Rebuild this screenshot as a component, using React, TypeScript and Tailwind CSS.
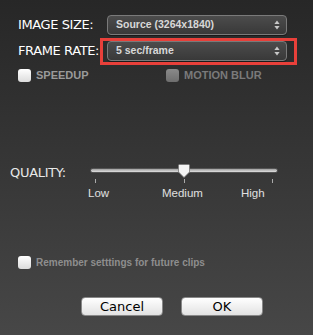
import React from "react";

const Arrows = () => (
  <svg width="6" height="10" viewBox="0 0 6 10" className="shrink-0">
    <path d="M3 0.5 L5.6 4 L0.4 4 Z" fill="#c8c8c8" />
    <path d="M3 9.5 L5.6 6 L0.4 6 Z" fill="#c8c8c8" />
  </svg>
);

const bold = { fontFamily: '"Liberation Sans", Arial, sans-serif' };

const Popup = ({ text }: { text: string }) => (
  <div className="w-[180px] h-[20px] rounded-[4px] border border-[#7a7a7a] bg-gradient-to-b from-[#4c4c4c] to-[#393939] flex items-center justify-between pl-[8px] pr-[6px] shadow-[0_1px_0_rgba(0,0,0,0.4)]">
    <span className="text-[10.5px] font-bold text-[#d8d8d8]" style={bold}>{text}</span>
    <Arrows />
  </div>
);

export default function App() {
  return (
    <div
      className="w-[313px] h-[335px] bg-gradient-to-b from-[#272727] to-[#474747] flex flex-col overflow-hidden"
      style={{ fontFamily: '"DejaVu Sans", "Liberation Sans", sans-serif' }}
    >
      <div className="pt-[15px] pl-[18px] flex flex-col">
        <div className="flex items-center h-[19px]">
          <span className="w-[89px] text-[13px] text-white tracking-[-0.4px]">IMAGE SIZE:</span>
          <Popup text="Source (3264x1840)" />
        </div>
        <div className="flex items-center h-[20px] mt-[7px]">
          <span className="w-[89px] text-[13px] text-white tracking-[-0.4px] whitespace-nowrap">FRAME RATE:</span>
          <div className="relative">
            <Popup text="5 sec/frame" />
            <div className="absolute -left-[7px] -right-[10px] -top-[3px] -bottom-[4px] border-[3px] border-[#e8403a] pointer-events-none" />
          </div>
        </div>
        <div className="flex items-center mt-[8px] h-[13px]">
          <div className="flex items-center w-[148px]">
            <div className="w-[13px] h-[13px] rounded-[3px] bg-gradient-to-b from-white to-[#dcdcdc]" />
            <span className="ml-[5px] text-[11px] font-bold text-[#9a9a9a]" style={bold}>SPEEDUP</span>
          </div>
          <div className="flex items-center">
            <div className="w-[13px] h-[13px] rounded-[3px] bg-gradient-to-b from-[#8a8a8a] to-[#6e6e6e]" />
            <span className="ml-[5px] text-[11px] font-bold text-[#7a7a7a]" style={bold}>MOTION BLUR</span>
          </div>
        </div>
      </div>

      <div className="mt-[82px] pl-[10px] flex">
        <span className="w-[80px] text-[13px] text-[#e8e8e8] leading-[16px] pt-[1px] tracking-[-0.3px]">QUALITY:</span>
        <div className="relative w-[188px] flex flex-col">
          <div className="h-[13px] relative flex items-center">
            <div className="w-full h-[5px] rounded-full bg-gradient-to-b from-[#a0a0a0] to-[#e0e0e0] border border-[#555]" />
            <svg className="absolute left-[88px] top-0" width="12" height="14" viewBox="0 0 12 14">
              <path d="M1.5 0.5 H10.5 Q11.5 0.5 11.5 1.5 V8 L6 13.5 L0.5 8 V1.5 Q0.5 0.5 1.5 0.5 Z" fill="#f4f4f4" stroke="#777" strokeWidth="0.8" />
            </svg>
          </div>
          <div className="flex justify-between px-[5px] mt-[2px] h-[4px]">
            <div className="w-px h-[4px] bg-[#aaa]" />
            <div className="w-px h-[4px] bg-[#aaa]" />
            <div className="w-px h-[4px] bg-[#aaa]" />
          </div>
          <div className="flex mt-[4px] text-[11.5px] text-[#e0e0e0] leading-[13px] -ml-[2px]" style={bold}>
            <span className="w-[74px]">Low</span>
            <span className="w-[79px]">Medium</span>
            <span>High</span>
          </div>
        </div>
      </div>

      <div className="mt-[56px] pl-[18px] flex items-center h-[13px]">
        <div className="w-[13px] h-[13px] rounded-[3px] bg-gradient-to-b from-white to-[#dcdcdc]" />
        <span className="ml-[5px] text-[10px] font-bold text-[#8e8e8e]" style={bold}>Remember setttings for future clips</span>
      </div>

      <div className="mt-[28px] pl-[81px] flex gap-[18px]">
        <div className="w-[82px] h-[19px] rounded-[4px] bg-gradient-to-b from-white to-[#e2e2e2] border border-[#888] flex items-center justify-center text-[13px] text-black">Cancel</div>
        <div className="w-[82px] h-[19px] rounded-[4px] bg-gradient-to-b from-white to-[#e2e2e2] border border-[#888] flex items-center justify-center text-[13px] text-black">OK</div>
      </div>
    </div>
  );
}
